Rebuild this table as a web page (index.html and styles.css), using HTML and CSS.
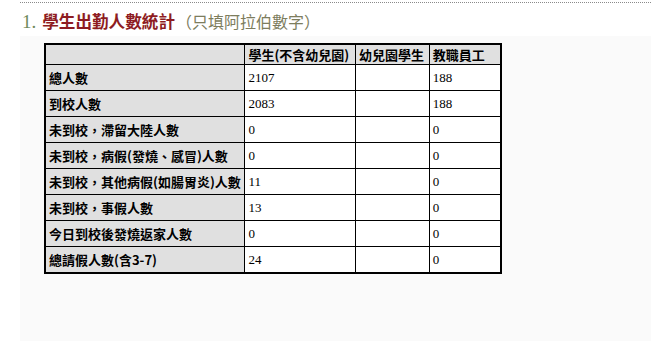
FILE: index.html
```html
<!DOCTYPE html>
<html lang="zh-Hant">
<head>
<meta charset="utf-8">
<title>學生出勤人數統計</title>
<link rel="stylesheet" href="styles.css">
</head>
<body>
<div class="wrap">
  <div class="rule"></div>
  <h2 class="title"><span class="num">1.</span><span class="main">學生出勤人數統計</span><span class="note">（只填阿拉伯數字）</span></h2>
  <div class="panel">
    <table class="stats">
      <colgroup>
        <col class="c1"><col class="c2"><col class="c3"><col class="c4">
      </colgroup>
      <thead>
        <tr><th></th><th>學生(不含幼兒園)</th><th>幼兒園學生</th><th>教職員工</th></tr>
      </thead>
      <tbody>
        <tr><th>總人數</th><td>2107</td><td></td><td>188</td></tr>
        <tr><th>到校人數</th><td>2083</td><td></td><td>188</td></tr>
        <tr><th>未到校，滯留大陸人數</th><td>0</td><td></td><td>0</td></tr>
        <tr><th>未到校，病假(發燒、感冒)人數</th><td>0</td><td></td><td>0</td></tr>
        <tr><th>未到校，其他病假(如腸胃炎)人數</th><td>11</td><td></td><td>0</td></tr>
        <tr><th>未到校，事假人數</th><td>13</td><td></td><td>0</td></tr>
        <tr><th>今日到校後發燒返家人數</th><td>0</td><td></td><td>0</td></tr>
        <tr><th>總請假人數(含3-7)</th><td>24</td><td></td><td>0</td></tr>
      </tbody>
    </table>
  </div>
</div>
</body>
</html>
```
FILE: styles.css
```css
html, body {
  margin: 0;
  padding: 0;
  background: #ffffff;
}
body {
  font-family: "Liberation Serif", "Noto Sans CJK TC", serif;
  height: 341px;
  overflow: hidden;
}
.wrap {
  margin-left: 20px;
  padding-top: 2px;
  height: 339px;
  display: flex;
  flex-direction: column;
}
.rule {
  border-top: 1px dotted #8a8a8a;
}
.title {
  margin: 0;
  padding: 7px 0 0 2px;
  height: 26px;
  font-size: 16px;
  line-height: 22px;
  font-weight: normal;
  white-space: nowrap;
  display: flex;
  align-items: baseline;
}
.title .num {
  color: #6f8a5c;
  font-family: "Liberation Serif", serif;
  font-size: 19px;
  margin-right: 6px;
}
.title .main {
  color: #8e1c22;
  font-weight: bold;
  font-family: "Noto Sans CJK TC", sans-serif;
  font-size: 16.6px;
}
.title .note {
  color: #7d7d5d;
  font-family: "Noto Sans CJK TC", sans-serif;
  font-size: 16px;
  margin-left: 1px;
}
.panel {
  flex: 1;
  background: #fafafa;
  padding: 7px 0 0 24px;
}
.stats {
  border-collapse: collapse;
  border: 2px solid #000;
  width: 458px;
  font-size: 13px;
  color: #000;
}
.stats col.c1 { width: 200px; }
.stats col.c2 { width: 111px; }
.stats col.c3 { width: 74px; }
.stats col.c4 { width: 73px; }
.stats th,
.stats td {
  border: 1px solid #000;
  padding: 0 3px;
  text-align: left;
  white-space: nowrap;
}
.stats th {
  background: #e0e0e0;
  font-weight: bold;
  font-family: "Noto Sans CJK TC", sans-serif;
}
.stats thead th {
  height: 19px;
  line-height: 18px;
}
.stats tbody th,
.stats tbody td {
  height: 25px;
  line-height: 18px;
}
.stats td {
  background: #ffffff;
  font-family: "Liberation Serif", serif;
}
```
